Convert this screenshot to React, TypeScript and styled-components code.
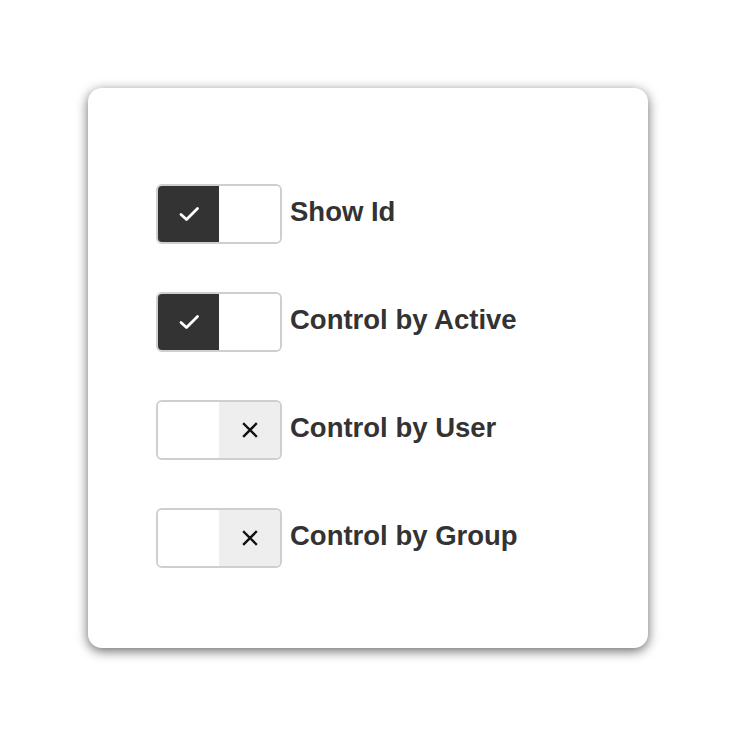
import React, { useState } from "react"
import styled, { createGlobalStyle } from "styled-components"

const GlobalStyle = createGlobalStyle`
  html, body {
    margin: 0;
    padding: 0;
    background: #ffffff;
    font-family: "Liberation Sans", Arial, Helvetica, sans-serif;
  }
`

interface IOption {
  id: string
  label: string
  checked: boolean
}

const initialOptions: IOption[] = [
  { id: "showId", label: "Show Id", checked: true },
  { id: "active", label: "Control by Active", checked: true },
  { id: "user", label: "Control by User", checked: false },
  { id: "group", label: "Control by Group", checked: false }
]

const CheckIcon = () => (
  <svg width="22" height="16" viewBox="0 0 22 16" fill="none">
    <path
      d="M3 8.5 L8.5 13.5 L19.5 2.5"
      stroke="#ffffff"
      strokeWidth="2.8"
      strokeLinecap="round"
      strokeLinejoin="round"
    />
  </svg>
)

const CrossIcon = () => (
  <svg width="16" height="16" viewBox="0 0 16 16" fill="none">
    <path
      d="M2 2 L14 14 M14 2 L2 14"
      stroke="#111111"
      strokeWidth="2.4"
      strokeLinecap="square"
    />
  </svg>
)

const App: React.FC = () => {
  const [options, setOptions] = useState(initialOptions)

  const toggle = (id: string) =>
    setOptions(prev =>
      prev.map(o => (o.id === id ? { ...o, checked: !o.checked } : o))
    )

  return (
    <Page>
      <GlobalStyle />
      <Card>
        {options.map(option => (
          <Row key={option.id}>
            <Toggle onClick={() => toggle(option.id)}>
              <Half on={option.checked} side="left">
                {option.checked && <CheckIcon />}
              </Half>
              <Half on={!option.checked} side="right">
                {!option.checked && <CrossIcon />}
              </Half>
            </Toggle>
            <Label>{option.label}</Label>
          </Row>
        ))}
      </Card>
    </Page>
  )
}

const Page = styled.div`
  width: 736px;
  height: 736px;
  display: flex;
  justify-content: center;
  align-items: center;
`

const Card = styled.div`
  box-sizing: border-box;
  width: 560px;
  height: 560px;
  padding: 96px 68px;
  background: #ffffff;
  border-radius: 14px;
  box-shadow: 0 3px 12px rgba(0, 0, 0, 0.6);
  display: flex;
  flex-direction: column;
  gap: 48px;
`

const Row = styled.div`
  display: flex;
  align-items: center;
  gap: 8px;
`

const Toggle = styled.button`
  box-sizing: border-box;
  width: 126px;
  height: 60px;
  padding: 0;
  display: flex;
  border: 2px solid #cfcfcf;
  border-radius: 6px;
  overflow: hidden;
  background: #ffffff;
  cursor: pointer;
`

const Half = styled.span<{ on: boolean; side: "left" | "right" }>`
  flex: 1;
  display: flex;
  align-items: center;
  justify-content: center;
  background: ${p =>
    p.on ? (p.side === "left" ? "#333333" : "#eeeeee") : "#ffffff"};
`

const Label = styled.span`
  font-size: 27.5px;
  line-height: 32px;
  font-weight: 700;
  color: #333333;
  padding-bottom: 4px;
`

export default App
